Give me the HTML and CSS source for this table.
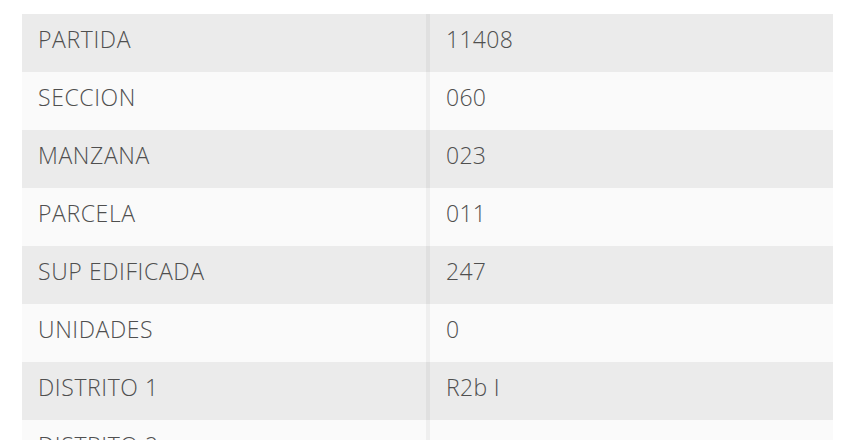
FILE: index.html
```html
<!DOCTYPE html>
<html lang="es">
<head>
<meta charset="utf-8">
<link rel="stylesheet" href="styles.css">
</head>
<body>
<div class="table">
  <div class="row"><div class="key">PARTIDA</div><div class="val">11408</div></div>
  <div class="row"><div class="key">SECCION</div><div class="val">060</div></div>
  <div class="row"><div class="key">MANZANA</div><div class="val">023</div></div>
  <div class="row"><div class="key">PARCELA</div><div class="val">011</div></div>
  <div class="row"><div class="key">SUP EDIFICADA</div><div class="val">247</div></div>
  <div class="row"><div class="key">UNIDADES</div><div class="val">0</div></div>
  <div class="row"><div class="key">DISTRITO 1</div><div class="val">R2b I</div></div>
  <div class="row"><div class="key">DISTRITO 2</div><div class="val"></div></div>
</div>
</body>
</html>
```
FILE: styles.css
```css
html, body {
  margin: 0;
  padding: 0;
  background: #ffffff;
  overflow: hidden;
}
body {
  padding: 14px 27px 0 22px;
  font-family: "Open Sans", Lato, sans-serif;
  font-weight: 300;
  font-size: 23px;
  color: #4f4f4f;
}
.table {
  display: flex;
  flex-direction: column;
  width: 811px;
}
.row {
  display: grid;
  grid-template-columns: 408px 1fr;
  height: 58px;
  align-items: stretch;
}
.row:nth-child(odd) {
  background: #ebebeb;
}
.row:nth-child(even) {
  background: #fafafa;
}
.key, .val {
  display: flex;
  align-items: center;
  padding-left: 16px;
  padding-bottom: 8px;
}
.key {
  letter-spacing: 0.6px;
  border-right: 4px solid rgba(0, 0, 0, 0.045);
}
.val {
  padding-left: 16px;
  letter-spacing: 0.3px;
}
```
